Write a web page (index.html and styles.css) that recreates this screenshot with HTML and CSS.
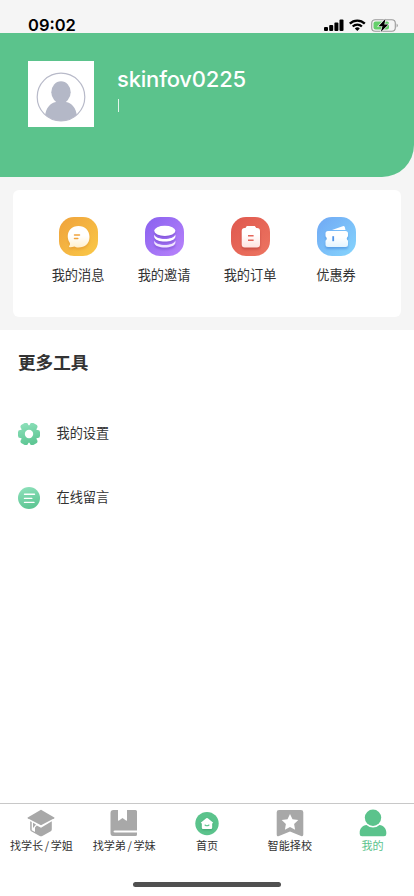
FILE: index.html
```html
<!DOCTYPE html>
<html lang="zh-CN">
<head>
<meta charset="utf-8">
<meta name="viewport" content="width=device-width, initial-scale=1">
<title>我的</title>
<link rel="stylesheet" href="styles.css">
</head>
<body>
<div class="screen">
  <header class="status">
    <span class="time">09:02</span>
    <svg class="status-icons" width="76" height="16" viewBox="0 0 76 16">
      <g fill="#000"><rect x="0" y="10" width="4" height="4" rx="1"/><rect x="5.200" y="8" width="4" height="6" rx="1"/><rect x="10.400" y="5.500" width="4" height="8.500" rx="1"/><rect x="15.500" y="2.500" width="4" height="11.500" rx="1"/></g>
      <g fill="none" stroke="#000" stroke-width="2.300"><path d="M25.800 6.600a10.700 10.700 0 0 1 15 0"/><path d="M28.700 9.500a6.600 6.600 0 0 1 9.200 0"/></g>
      <path d="M30.800 11.400a3.600 3.600 0 0 1 5 0L33.300 14z"/>
      <rect x="47.700" y="2.700" width="23.600" height="11.600" rx="3.500" fill="#f5f5f5" stroke="#999" stroke-width="1.100"/>
      <rect x="49.500" y="4.500" width="15.500" height="8" rx="2" fill="#65cf6b"/>
      <path d="M72.600 6.500q2.500 2 0 4z" fill="#999"/>
      <path d="M61.500 1.800L54.500 9.200h4l-1.700 5.800 7.500-7.500h-4z" stroke="#f5f5f5" stroke-width="1.300" paint-order="stroke"/>
    </svg>
  </header>
  <section class="profile">
    <svg class="avatar" width="66" height="66" viewBox="0 0 66 66">
      <defs><clipPath id="face"><circle cx="33" cy="36" r="24"/></clipPath></defs>
      <rect width="66" height="66" fill="#fff"/>
      <g fill="#b4b8c7" clip-path="url(#face)"><ellipse cx="33" cy="31.300" rx="9.700" ry="11"/><path d="M28 38h10v3c6 1 10 6 11 14v7H17v-7c1-8 5-13 11-14z"/></g>
      <circle cx="33" cy="36" r="23.800" fill="none" stroke="#b8bac9" stroke-width="1.200"/>
    </svg>
    <div class="identity"><div class="name">skinfov0225</div><div class="divider"></div></div>
  </section>
  <section class="shortcuts">
    <nav class="card">
      <a class="shortcut">
        <svg width="39" height="39" viewBox="0 0 39 39"><defs><linearGradient id="or" x1="0" y1="0" x2="1" y2="1"><stop stop-color="#efa23c"/><stop offset="1" stop-color="#fac947"/></linearGradient><linearGradient id="wo" x1="0" y1="0" x2="0" y2="1"><stop offset=".45" stop-color="#fff"/><stop offset="1" stop-color="#fff0ce"/></linearGradient></defs><rect width="39" height="39" rx="15" fill="url(#or)"/><path class="sh-orange" d="M19.500 9C26 9 30.500 13.500 30.500 20S26 30.500 19.500 30.500c-2 0-3.200-.6-4.200-1-1.500.5-3 .8-4.300.7-1.200-.1-1.400-.9-.5-1.800.8-.8.700-2-.2-3.400C6.200 17.500 10.500 9 19.500 9z" fill="url(#wo)"/><path d="M15.500 18h5M15.500 21.500h3.300" stroke="#f0a33c" stroke-width="1.500" stroke-linecap="round"/></svg>
        <span>我的消息</span>
      </a>
      <a class="shortcut">
        <svg width="39" height="39" viewBox="0 0 39 39"><defs><linearGradient id="pu" x1="0" y1="0" x2="1" y2="1"><stop stop-color="#8961ef"/><stop offset="1" stop-color="#b984fb"/></linearGradient></defs><rect width="39" height="39" rx="15" fill="url(#pu)"/><g class="sh-purple"><ellipse cx="19.800" cy="13.800" rx="10.600" ry="5.100" fill="#fff"/><path d="M9.200 17.500c2 6 19.200 6 21.200 0v2.200c-.5 6.400-20.700 6.400-21.200 0z" fill="#fff"/><path d="M9.200 23.500c2 6 19.200 6 21.200 0v2.300c-.5 6.300-20.700 6.300-21.200 0z" fill="#f0e5ff"/></g></svg>
        <span>我的邀请</span>
      </a>
      <a class="shortcut">
        <svg width="39" height="39" viewBox="0 0 39 39"><defs><linearGradient id="re" x1="0" y1="0" x2="1" y2="1"><stop stop-color="#df584e"/><stop offset="1" stop-color="#ed7561"/></linearGradient><linearGradient id="wr" x1="0" y1="0" x2="0" y2="1"><stop offset=".4" stop-color="#fff"/><stop offset="1" stop-color="#ffe3df"/></linearGradient></defs><rect width="39" height="39" rx="15" fill="url(#re)"/><path class="sh-red" d="M15.800 9h8l1.500 2h.7q3 0 3 3v13.500q0 3-3 3H13.700q-3 0-3-3V14q0-3 3-3h.7z" fill="url(#wr)"/><path d="M17 18.700h5.600M17 23.300h5.600" stroke="#e4675b" stroke-width="1.500"/></svg>
        <span>我的订单</span>
      </a>
      <a class="shortcut">
        <svg width="39" height="39" viewBox="0 0 39 39"><defs><linearGradient id="bl" x1="0" y1="0" x2="1" y2="1"><stop stop-color="#70a8f4"/><stop offset="1" stop-color="#85d5fd"/></linearGradient><linearGradient id="wb" x1="0" y1="0" x2="0" y2="1"><stop offset=".4" stop-color="#fff"/><stop offset="1" stop-color="#e3f4ff"/></linearGradient></defs><rect width="39" height="39" rx="15" fill="url(#bl)"/><path d="M15 13l10.700-3.800q1.700-.5 2.100 1l.7 2.800z" fill="#fff"/><path class="sh-blue" d="M11 14h17.500q2.500 0 2.500 2.500v2.700q-2.500 2.300 0 4.600v3.700q0 2.500-2.500 2.500H11q-2.500 0-2.500-2.500v-3.700q2.500-2.300 0-4.600v-2.700Q8.500 14 11 14z" fill="url(#wb)"/><path d="M16.200 19.200v5" stroke="#4f94e9" stroke-width="1.800"/></svg>
        <span>优惠券</span>
      </a>
    </nav>
  </section>
  <main class="tools">
    <h2>更多工具</h2>
    <a class="tool">
      <svg width="22" height="22" viewBox="0 0 22 22"><defs><linearGradient id="gr" x1="0" y1="0" x2=".3" y2="1"><stop stop-color="#91e2bd"/><stop offset="1" stop-color="#5fc795"/></linearGradient><clipPath id="gear"><circle cx="11" cy="11" r="8.800"/><rect x="0" y="7" width="22" height="8" rx="2.200"/><rect x="-.7" y="7" width="23.400" height="8" rx="2.200" transform="rotate(60 11 11)"/><rect x="-.7" y="7" width="23.400" height="8" rx="2.200" transform="rotate(120 11 11)"/></clipPath></defs><rect width="22" height="22" fill="url(#gr)" clip-path="url(#gear)"/><circle cx="11" cy="11" r="4.200" fill="#fff"/></svg>
      <span>我的设置</span>
    </a>
    <a class="tool">
      <svg width="22" height="22" viewBox="0 0 22 22"><circle cx="11" cy="11" r="11" fill="url(#gr)"/><path d="M6.500 7.300h10M6.500 11.400h7.300M6.500 15.400h9.500" stroke="#fff" stroke-width="1.400" stroke-linecap="round"/></svg>
      <span>在线留言</span>
    </a>
  </main>
  <footer class="tabs">
    <a class="tab">
      <svg width="28" height="28" viewBox="0 0 28 28" fill="#a8a8a8"><path d="M14 .7L.7 8.400Q.2 8.900.7 9.300L14 16.300l13.300-7q.5-.4 0-.9z"/><path d="M3.200 12.300l1.500.8v8.200l3.300 1.800v-4.600l1.800-2.100L14 18.800l10.800-6.500v8q0 1.300-1 2L15.300 27q-1.300.7-2.600 0L4.200 22.300q-1-.7-1-2z"/><path d="M6 13.800l3 1.600-3 3.500z"/></svg>
      <span>找学长<i>/</i>学姐</span>
    </a>
    <a class="tab">
      <svg width="28" height="28" viewBox="0 0 28 28" fill="#a8a8a8"><path d="M3.500 1H8v10q0 1.200 1 .5l3.500-2.400L16 11.500q1 .7 1-.5V1h8.500Q27 1 27 2.500V21.500H5q-1.500 0-1.500 1t1.500 1h22v2q0 1.500-1.500 1.500H3Q.5 27 .5 24V4q0-3 3-3z"/></svg>
      <span>找学弟<i>/</i>学妹</span>
    </a>
    <a class="tab">
      <svg width="28" height="28" viewBox="0 0 28 28"><circle cx="14" cy="14.600" r="11.700" fill="#5bc38c"/><path class="sh-home" d="M13.200 9.300q.8-.6 1.600 0l5.200 4.300q.5.600-.8.700v4.500q0 1.200-1.200 1.200h-8q-1.200 0-1.200-1.200v-4.500q-1.300-.1-.8-.7z" fill="#fff"/><path d="M12 16q2 1.500 4 0" stroke="#5bc38c" fill="none" stroke-width="1.100" stroke-linecap="round"/></svg>
      <span>首页</span>
    </a>
    <a class="tab">
      <svg width="28" height="28" viewBox="0 0 28 28"><path d="M3 1h22q2.300 0 2.300 2.300v22.200q0 2.400-2.300 1.600L14 22.500 3 27.100Q.7 28 .7 25.500V3.300Q.7 1 3 1z" fill="#a8a8a8"/><path d="M14 5l2.500 5.300 5.800.8-4.200 4 1 5.700-5.100-2.700-5.100 2.700 1-5.700-4.200-4 5.800-.8z" fill="#fff"/></svg>
      <span>智能择校</span>
    </a>
    <a class="tab active">
      <svg width="28" height="28" viewBox="0 0 28 28" fill="#5bc38c"><circle cx="14" cy="8.700" r="8.200"/><path d="M7.500 16q3 2.500 6.500 2.500t6.500-2.500c4 .5 6.800 3.500 6.800 7.500v1.500q0 2.300-2.300 2.300H3Q.7 27.300.7 25v-1.500C.7 19.500 3.500 16.500 7.500 16z"/></svg>
      <span>我的</span>
    </a>
  </footer>
  <div class="home-bar"></div>
</div>
</body>
</html>
```
FILE: styles.css
```css
* { box-sizing: border-box; }
body {
  margin: 0;
  background: #fff;
  color: #333;
  font-family: "Noto Sans CJK SC", sans-serif;
}
svg { display: block; flex: none; }
.screen {
  display: flex;
  flex-direction: column;
  width: 414px;
  height: 896px;
  overflow: hidden;
  background: linear-gradient(#f5f5f5 330px, #fff 330px);
}
.status, .profile, .shortcuts { flex: none; }
.status {
  display: flex;
  justify-content: space-between;
  height: 33px;
  padding: 17px 14px 0 28px;
}
.time {
  margin-top: -1px;
  color: #000;
  font: 600 16.500px/18px Inter, sans-serif;
}
.profile {
  display: flex;
  gap: 23px;
  height: 144px;
  padding: 28px;
  background: #5bc38c;
  border-bottom-right-radius: 32px;
}
.name {
  margin-top: 3px;
  color: #fff;
  font: 500 22px/30px Inter, sans-serif;
  letter-spacing: -.2px;
  white-space: nowrap;
}
.divider {
  width: 1px;
  height: 13px;
  margin: 5px 0 0 1px;
  background: #e2f5eb;
}
.shortcuts {
  height: 153px;
  padding: 13px;
}
.card {
  display: flex;
  height: 127px;
  padding: 27px 22px 0;
  background: #fff;
  border-radius: 6px;
}
.shortcut {
  display: flex;
  flex: 1;
  flex-direction: column;
  align-items: center;
  gap: 9px;
  font-size: 13.200px;
  line-height: 20px;
}
.sh-orange { filter: drop-shadow(0 2px 1px #d8852566); }
.sh-purple { filter: drop-shadow(0 2px 1px #6336bd77); }
.sh-red { filter: drop-shadow(0 2px 1px #a6302b77); }
.sh-blue { filter: drop-shadow(0 2px 1px #3479cf77); }
.sh-home { filter: drop-shadow(0 1px 1px #278b5788); }
.tools {
  flex: 1;
  padding: 20px 18px 0;
}
h2 {
  margin: 0 0 39px;
  font-size: 17.600px;
  font-weight: 700;
  line-height: 24px;
}
.tool {
  display: flex;
  align-items: center;
  gap: 16.500px;
  height: 42px;
  margin-bottom: 22px;
  font-size: 13.200px;
  line-height: 20px;
}
.tool span { padding-bottom: 2px; }
.tabs {
  display: flex;
  height: 80px;
  padding-top: 5px;
  border-top: 1px solid #c8c8c8;
  background: #fff;
}
.tab {
  display: flex;
  flex: 1;
  flex-direction: column;
  align-items: center;
  font-size: 11.100px;
  line-height: 16px;
  white-space: nowrap;
}
.tab i {
  margin: 0 1.600px;
  font-style: normal;
}
.active { color: #5bc38c; }
.home-bar {
  flex: none;
  width: 148px;
  height: 5px;
  margin: -1px auto 9px;
  border-radius: 3px;
  background: #505050;
}
```
